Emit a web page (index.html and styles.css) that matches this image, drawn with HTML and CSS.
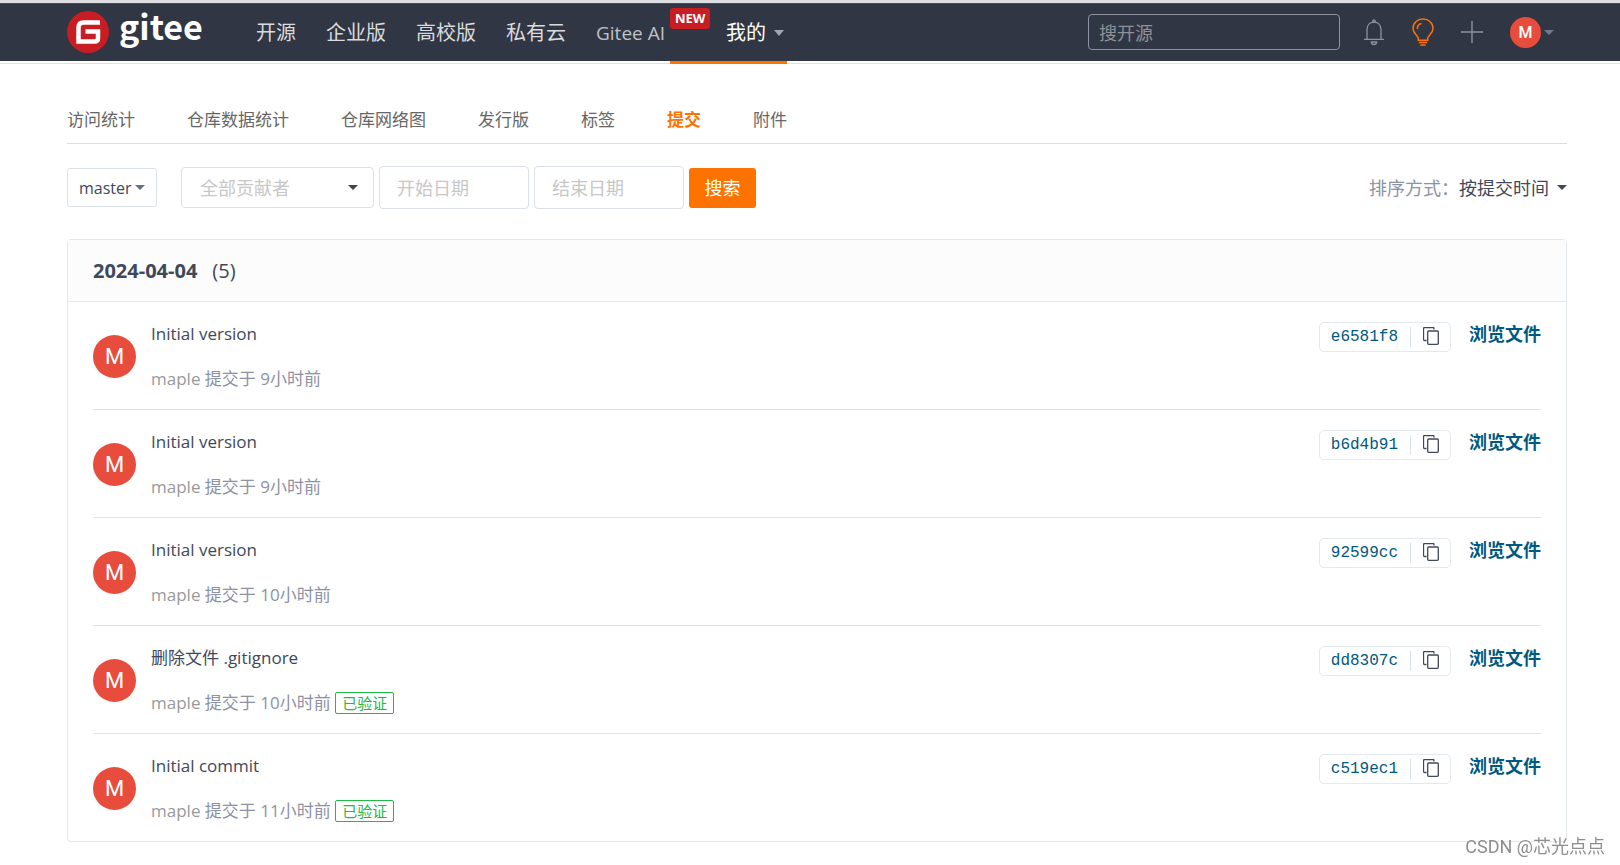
FILE: index.html
```
<!DOCTYPE html>
<html lang="zh-CN">
<head>
    <meta charset="UTF-8">
    <title>提交 - Gitee</title>
    <link rel="stylesheet" href="styles.css">
</head>
<body>
<svg class="sprite" aria-hidden="true">
    <symbol id="copy" viewBox="0 0 16 18">
        <path d="M3.5 13.5h-2a1 1 0 0 1-1-1v-11a1 1 0 0 1 1-1h8.5a1 1 0 0 1 1 1v1"/>
        <rect x="4.7" y="4" width="10.6" height="13.3" rx="1"/>
    </symbol>
</svg>
<!-- 顶部导航 -->
<header class="header">
    <div class="nav">
        <a class="logo" href="#">
            <svg width="42" height="42" viewBox="0 0 42 42">
                <circle cx="21" cy="21" r="21" fill="#c71d23"/>
                <path d="M33 11.500H16.500Q11.500 11.500 11.500 16.500V30.500H27.500Q31 30.500 31 27V20.500H18.500" fill="none" stroke="#fff" stroke-width="4.500"/>
            </svg>
            <span>gitee</span>
        </a>
        <nav>
            <ul class="menu">
                <li><a href="#">开源</a></li>
                <li><a href="#">企业版</a></li>
                <li><a href="#">高校版</a></li>
                <li><a href="#">私有云</a></li>
                <li><a class="ai" href="#">Gitee AI<span class="new">NEW</span></a></li>
                <li><a class="mine" href="#">我的<i class="caret"></i></a></li>
            </ul>
        </nav>
        <div class="tools">
            <input class="search" type="text" placeholder="搜开源" aria-label="搜开源">
            <button class="icon" type="button" aria-label="通知">
                <svg width="22" height="28" viewBox="0 0 22 28" fill="none" stroke="#8c92a4" stroke-width="1.300">
                    <path d="M4 21V11.500C4 7 7 4.200 11 4.200S18 7 18 11.500V21M1 21.300H21M8.300 24C8.300 27.300 13.700 27.300 13.700 24Z"/>
                    <circle cx="11" cy="3" r="1.200"/>
                </svg>
            </button>
            <button class="icon" type="button" aria-label="动态">
                <svg width="22" height="28" viewBox="0 0 22 28" fill="none" stroke="#fe7300" stroke-width="1.500">
                    <path d="M6.300 22.300V20.500C6.300 17.500 1 16 1 10.500C1 5 5.300 1 11 1S21 5 21 10.500C21 16 15.700 17.500 15.700 20.500V22.300Z"/>
                    <path d="M5.300 11C5.300 8 7 6 9.500 5.500M6.800 24.500H15.200M8.300 27H13.700"/>
                </svg>
            </button>
            <button class="icon" type="button" aria-label="新建">
                <svg width="22" height="22" viewBox="0 0 22 22" fill="none" stroke="#8c92a4" stroke-width="1.400">
                    <path d="M11 0V22M0 11H22"/>
                </svg>
            </button>
            <a class="user" href="#"><span class="face">M</span><i class="caret"></i></a>
        </div>
    </div>
</header>

<main class="main">
    <ul class="tabs">
        <li><a href="#">访问统计</a></li>
        <li><a href="#">仓库数据统计</a></li>
        <li><a href="#">仓库网络图</a></li>
        <li><a href="#">发行版</a></li>
        <li><a href="#">标签</a></li>
        <li><a class="current" href="#">提交</a></li>
        <li><a href="#">附件</a></li>
    </ul>

    <!-- 筛选 -->
    <form class="filter">
        <div class="drop branch">
            <select aria-label="分支"><option>master</option></select>
        </div>
        <div class="drop people">
            <select aria-label="贡献者"><option>全部贡献者</option></select>
        </div>
        <input class="date" type="text" placeholder="开始日期" aria-label="开始日期">
        <input class="date" type="text" placeholder="结束日期" aria-label="结束日期">
        <button class="submit" type="button">搜索</button>
        <div class="sort">
            <label for="sort">排序方式：</label>
            <div class="drop">
                <select id="sort"><option>按提交时间</option></select>
            </div>
        </div>
    </form>

    <!-- 提交列表 -->
    <section class="panel">
        <h2 class="day">2024-04-04 <span>(5)</span></h2>
        <ul class="commits">
            <li>
                <span class="avatar">M</span>
                <div class="info">
                    <a class="title" href="#">Initial version</a>
                    <p><a href="#">maple</a> 提交于 9小时前</p>
                </div>
                <div class="sha"><a href="#">e6581f8</a><button type="button" aria-label="复制"><svg><use href="#copy"/></svg></button></div>
                <a class="browse" href="#">浏览文件</a>
            </li>
            <li>
                <span class="avatar">M</span>
                <div class="info">
                    <a class="title" href="#">Initial version</a>
                    <p><a href="#">maple</a> 提交于 9小时前</p>
                </div>
                <div class="sha"><a href="#">b6d4b91</a><button type="button" aria-label="复制"><svg><use href="#copy"/></svg></button></div>
                <a class="browse" href="#">浏览文件</a>
            </li>
            <li>
                <span class="avatar">M</span>
                <div class="info">
                    <a class="title" href="#">Initial version</a>
                    <p><a href="#">maple</a> 提交于 10小时前</p>
                </div>
                <div class="sha"><a href="#">92599cc</a><button type="button" aria-label="复制"><svg><use href="#copy"/></svg></button></div>
                <a class="browse" href="#">浏览文件</a>
            </li>
            <li>
                <span class="avatar">M</span>
                <div class="info">
                    <a class="title" href="#">删除文件 .gitignore</a>
                    <p><a href="#">maple</a> 提交于 10小时前 <span class="verified">已验证</span></p>
                </div>
                <div class="sha"><a href="#">dd8307c</a><button type="button" aria-label="复制"><svg><use href="#copy"/></svg></button></div>
                <a class="browse" href="#">浏览文件</a>
            </li>
            <li>
                <span class="avatar">M</span>
                <div class="info">
                    <a class="title" href="#">Initial commit</a>
                    <p><a href="#">maple</a> 提交于 11小时前 <span class="verified">已验证</span></p>
                </div>
                <div class="sha"><a href="#">c519ec1</a><button type="button" aria-label="复制"><svg><use href="#copy"/></svg></button></div>
                <a class="browse" href="#">浏览文件</a>
            </li>
        </ul>
    </section>
</main>
<div class="watermark">CSDN @芯光点点</div>
</body>
</html>
```
FILE: styles.css
```
* {
    box-sizing: border-box;
    margin: 0;
    padding: 0;
}

body {
    background: #fff;
    color: #40485b;
    font: 17px/24px "Open Sans", "Noto Sans CJK SC", sans-serif;
}

ul {
    list-style: none;
}

a {
    color: inherit;
    text-decoration: none;
}

input, select, button {
    font: inherit;
    color: inherit;
    background: none;
    border: 0;
    outline: none;
}

button {
    cursor: pointer;
}

.sprite {
    display: none;
}

.caret, .drop::after {
    content: "";
    display: block;
    border: 5px solid transparent;
    border-top-color: currentColor;
    border-bottom: 0;
}

/* 顶部导航 */
.header {
    border-top: 3px solid #dcdee3;
    border-bottom: 1px solid #dfdfe5;
    padding-bottom: 2px;
}

.nav {
    display: flex;
    align-items: center;
    height: 58px;
    padding: 0 66px 0 67px;
    background: #303643;
    box-shadow: inset 0 1px #474c58;
}

.logo {
    display: flex;
    align-items: center;
    gap: 10px;
    width: 174px;
    color: #fff;
    font: bold 34px/42px "Noto Sans CJK SC", sans-serif;
}

.logo span {
    padding-bottom: 12px;
}

.menu {
    display: flex;
    font-size: 20px;
    line-height: 56px;
    color: #dadbde;
}

.menu a {
    display: block;
    position: relative;
    padding: 2px 15px 0;
    white-space: nowrap;
}

.menu .ai {
    padding-right: 5px;
    font-size: 19px;
    color: #c0c2c7;
}

.new {
    position: absolute;
    left: 100%;
    top: 5px;
    padding: 0 5px;
    border-radius: 3px;
    background: #c71d23;
    color: #fff;
    font-size: 13px;
    font-weight: bold;
    line-height: 21px;
}

.menu .mine {
    display: flex;
    align-items: center;
    gap: 8px;
    padding: 2px 3px 0 56px;
    color: #fff;
}

.mine .caret {
    color: #a3a6ad;
    border-width: 6px 5px 0;
}

.mine::after {
    content: "";
    position: absolute;
    left: 0;
    right: 0;
    bottom: -3px;
    height: 3px;
    background: #fe7300;
}

.tools {
    display: flex;
    align-items: center;
    margin-left: auto;
}

.search {
    width: 252px;
    height: 36px;
    margin-right: 23px;
    padding: 2px 10px 0;
    border: 1px solid #8c92a4;
    border-radius: 4px;
    font-size: 18px;
}

.search::placeholder {
    color: #8f9298;
}

.icon {
    display: flex;
    margin-right: 27px;
}

.user {
    display: flex;
    align-items: center;
    gap: 3px;
    color: #727989;
}

.face, .avatar {
    border-radius: 50%;
    background: #e84c3d;
    color: #fff;
    text-align: center;
    font-family: Roboto, sans-serif;
}

.face {
    width: 31px;
    font-size: 16px;
    font-weight: 500;
    line-height: 31px;
}

/* 标签页 */
.main {
    padding: 38px 53px 20px 67px;
}

.tabs {
    display: flex;
    gap: 52px;
    padding-bottom: 5px;
    border-bottom: 1px solid #dddddf;
    color: #666;
    line-height: 36px;
}

.tabs .current {
    color: #fe7300;
    font-weight: bold;
}

/* 筛选 */
.filter {
    display: flex;
    align-items: center;
    gap: 5px;
    padding: 22px 0 30px;
    font-size: 18px;
}

.drop {
    display: flex;
    align-items: center;
    position: relative;
}

.drop select {
    width: 100%;
    height: 100%;
    appearance: none;
}

.drop::after {
    position: absolute;
    right: 0;
    pointer-events: none;
}

.branch {
    width: 90px;
    height: 39px;
    margin-right: 19px;
    border: 1px solid #dce3e8;
    border-radius: 3px;
    font-size: 16px;
}

.branch select {
    padding-left: 11px;
}

.branch::after {
    right: 11px;
    color: #6b7184;
}

.people {
    width: 193px;
    height: 41px;
    border: 1px solid #dce0e8;
    border-radius: 4px;
}

.people select {
    padding-left: 18px;
    color: #c7c7c7;
}

.people::after {
    right: 15px;
    color: #444;
}

.date {
    width: 150px;
    height: 43px;
    padding: 0 17px;
    border: 1px solid #dce0e8;
    border-radius: 4px;
}

.date::placeholder {
    color: #c7c7c7;
}

.submit {
    width: 67px;
    height: 40px;
    border-radius: 3px;
    background: #fe7300;
    color: #fff;
}

.sort {
    display: flex;
    margin-left: auto;
}

.sort label {
    color: #8c92a4;
}

.sort select {
    padding-right: 18px;
}

/* 提交列表 */
.panel {
    border: 1px solid #e3e9ed;
    border-radius: 4px;
}

.day {
    display: flex;
    gap: 15px;
    padding: 0 25px;
    border-bottom: 1px solid #e3e9ed;
    background: #fcfcfc;
    font-size: 20px;
    line-height: 61px;
}

.day span {
    font-weight: normal;
}

.commits {
    padding: 0 25px;
}

.commits li {
    display: flex;
    align-items: flex-start;
    padding: 20px 0 17px;
    border-bottom: 1px solid #dce3e8;
}

.commits li:last-child {
    border-bottom: 0;
}

.avatar {
    width: 43px;
    margin: 13px 15px 0 0;
    font-size: 22px;
    line-height: 43px;
}

.info {
    flex: 1;
}

.title {
    display: block;
    margin-bottom: 20px;
}

.info p {
    line-height: 26px;
    color: #8c92a4;
}

.info p a {
    color: #999;
}

.verified {
    display: inline-block;
    padding: 0 6px;
    border: 1px solid #21ba45;
    border-radius: 2px;
    color: #21ba45;
    font-size: 15px;
    line-height: 20px;
}

.sha {
    display: flex;
    align-items: center;
    height: 30px;
    margin-right: 18px;
    border: 1px solid #e3e9ed;
    border-radius: 5px;
    color: #005980;
    font: 16px/20px "Liberation Mono", monospace;
}

.sha a {
    padding: 0 12px 0 11px;
    border-right: 1px solid #dce3e8;
}

.sha button {
    padding: 0 11px 3px 12px;
}

.sha svg {
    display: block;
    width: 16px;
    height: 18px;
    fill: none;
    stroke: #40485b;
    stroke-width: 1.3;
}

.browse {
    color: #005980;
    font-size: 18px;
    font-weight: bold;
}

.watermark {
    position: fixed;
    right: 15px;
    bottom: 6px;
    color: #8e8e8e;
    text-shadow: 0 0 2px #fff;
    font: 18px/24px Roboto, "Noto Sans CJK SC", sans-serif;
}
```
